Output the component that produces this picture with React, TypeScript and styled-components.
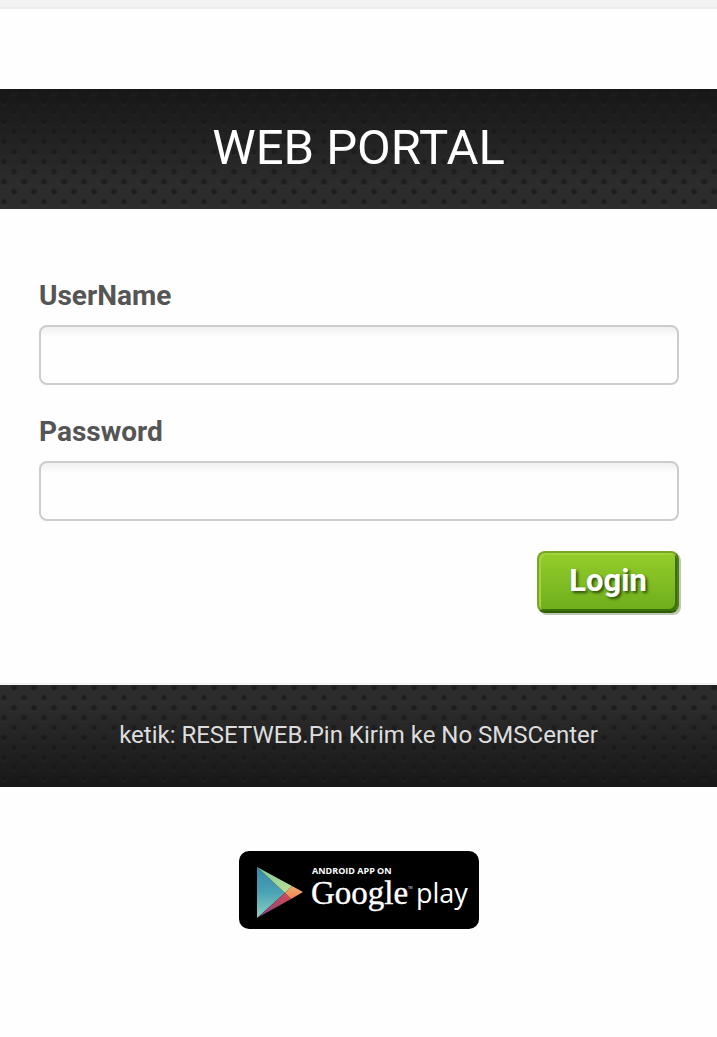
import React, { useState } from "react";
import styled, { createGlobalStyle, css } from "styled-components";

const GlobalStyle = createGlobalStyle`
  *, *::before, *::after { box-sizing: border-box; }
  body {
    margin: 0;
    background: #fefefe;
    color: #555;
    font-family: Roboto, "Liberation Sans", sans-serif;
  }
`;

const Page = styled.div`
  display: flex;
  flex-direction: column;
`;

const TopStrip = styled.div`
  height: 9px;
  margin-bottom: 80px;
  background: #f3f3f3;
  border-bottom: 2px solid #ececec;
`;

const perforated = css`
  --hole: radial-gradient(circle 4px at center, #141414b0 0 45%, #14141400 100%);
  --rim: radial-gradient(circle 4px at center, #ffffff0c 0 50%, #ffffff00 100%);
`;

const Band = styled.div<{ $flip?: boolean }>`
  ${perforated}
  display: flex;
  align-items: center;
  justify-content: center;
  text-align: center;
  background-image: var(--hole), var(--hole), var(--rim), var(--rim),
    linear-gradient(${(p) => (p.$flip ? "to top" : "to bottom")}, #171717, #2c2c2c 80%);
  background-size: 20px 20px, 20px 20px, 20px 20px, 20px 20px, auto;
  background-position: 4px -7px, 14px 3px, 4px -6px, 14px 4px, 0 0;
`;

const Header = styled(Band).attrs({ as: "header" })`
  min-height: 120px;
  padding-bottom: 2px;
`;

const Title = styled.h1`
  margin: 0;
  font-size: 49px;
  line-height: 60px;
  font-weight: 400;
  color: #fff;
`;

const Form = styled.form`
  display: flex;
  flex-direction: column;
  padding: 70px 38px 70px 39px;
`;

const Field = styled.div`
  display: flex;
  flex-direction: column;
  gap: 12px;
  margin-bottom: 30px;
`;

const Label = styled.label`
  font-size: 28px;
  line-height: 34px;
  font-weight: 700;
  color: #555;
`;

const TextInput = styled.input`
  width: 100%;
  height: 60px;
  padding: 0 14px;
  border: 2px solid #ccc;
  border-radius: 8px;
  background: linear-gradient(#f0f0f0, #fefefe 10px);
  font: 400 28px Roboto, "Liberation Sans", sans-serif;
  color: #555;
  outline: none;
`;

const LoginButton = styled.button`
  align-self: flex-end;
  width: 142px;
  height: 62px;
  padding: 0 0 4px;
  border: 2px solid;
  border-color: #78a626 #4f7d18 #2f5c06 #78a626;
  border-radius: 8px;
  background: linear-gradient(#94cd2b, #6eae1c);
  box-shadow: inset 2px 2px 0 #a0d43a, inset -2px -2px 0 #3c7008, 2px 2px 0 #bcc8b0;
  color: #fff;
  font: 700 31px Roboto, "Liberation Sans", sans-serif;
  text-shadow: 2px 2px 3px #2a5008;
  cursor: pointer;
`;

const Footer = styled(Band).attrs({ as: "footer" })`
  min-height: 104px;
  padding-bottom: 2px;
  border-top: 2px solid #f3f3f3;
  background-clip: padding-box;
`;

const Hint = styled.p`
  margin: 0;
  font-size: 24px;
  line-height: 32px;
  color: #ddd;
`;

const StoreLink = styled.a`
  align-self: center;
  display: block;
  margin: 64px 0 104px;
  line-height: 0;
`;

function PlayBadge() {
  return (
    <svg width="240" height="78" viewBox="0 0 240 78" role="img" aria-label="Android app on Google play">
      <defs>
        <linearGradient id="blue" x1="0" y1="0" x2="0" y2="1">
          <stop offset="0" stopColor="#3586a8" />
          <stop offset="0.5" stopColor="#4aa3b5" />
          <stop offset="1" stopColor="#8cd3c0" />
        </linearGradient>
        <linearGradient id="green" x1="0" y1="0" x2="1" y2="1">
          <stop offset="0" stopColor="#7cc79c" />
          <stop offset="1" stopColor="#bfe094" />
        </linearGradient>
        <linearGradient id="red" x1="1" y1="0" x2="0" y2="1">
          <stop offset="0" stopColor="#dc4a50" />
          <stop offset="1" stopColor="#74468c" />
        </linearGradient>
        <linearGradient id="orange" x1="0" y1="0" x2="0" y2="1">
          <stop offset="0" stopColor="#f0b070" />
          <stop offset="1" stopColor="#ee8456" />
        </linearGradient>
      </defs>
      <rect width="240" height="78" rx="10" fill="#000" />
      <path d="M18 16 L46 42 L18 67Z" fill="url(#blue)" />
      <path d="M18 16 L53 35 L46 42Z" fill="url(#green)" />
      <path d="M46 42 L52 48 L18 67Z" fill="url(#red)" />
      <path d="M53 35 L64 41 L52 48 L46 42Z" fill="url(#orange)" />
      <g fill="#fff">
        <text x="73" y="23" fontFamily='"Open Sans", sans-serif' fontWeight="700" fontSize="9">ANDROID APP ON</text>
        <text x="72" y="53" fontFamily='"Liberation Serif", serif' fontSize="33" stroke="#fff" strokeWidth="0.4">Google</text>
        <text x="169" y="38" fontFamily='"Open Sans", sans-serif' fontSize="3">TM</text>
        <text x="177" y="52" fontFamily='"Open Sans", sans-serif' fontSize="27">play</text>
      </g>
    </svg>
  );
}

export default function App() {
  const [userName, setUserName] = useState("");
  const [password, setPassword] = useState("");

  return (
    <>
      <GlobalStyle />
      <Page>
        <TopStrip />
        <Header>
          <Title>WEB PORTAL</Title>
        </Header>
        <Form onSubmit={(e: React.FormEvent) => e.preventDefault()}>
          <Field>
            <Label htmlFor="username">UserName</Label>
            <TextInput id="username" type="text" value={userName} onChange={(e) => setUserName(e.target.value)} />
          </Field>
          <Field>
            <Label htmlFor="password">Password</Label>
            <TextInput id="password" type="password" value={password} onChange={(e) => setPassword(e.target.value)} />
          </Field>
          <LoginButton type="submit">Login</LoginButton>
        </Form>
        <Footer $flip>
          <Hint>ketik: RESETWEB.Pin Kirim ke No SMSCenter</Hint>
        </Footer>
        <StoreLink href="#play">
          <PlayBadge />
        </StoreLink>
      </Page>
    </>
  );
}
